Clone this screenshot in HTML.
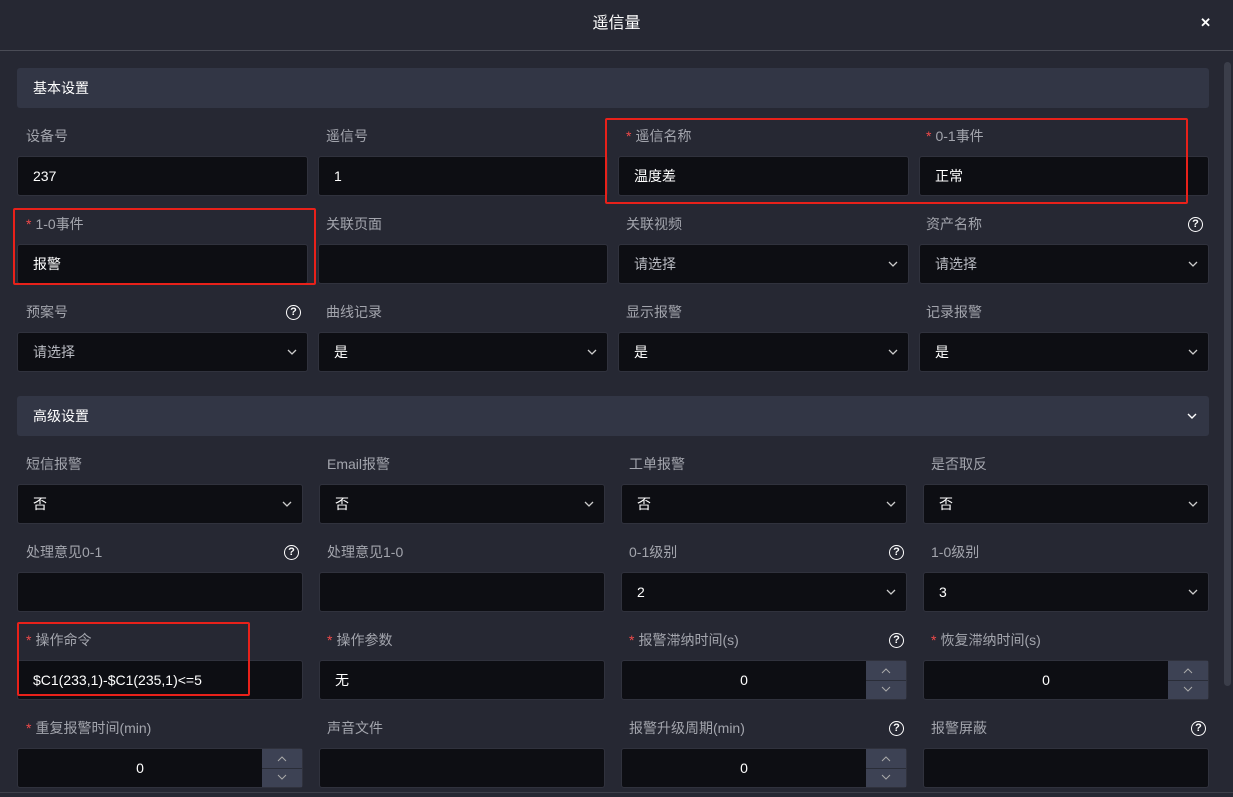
<!DOCTYPE html><html><head><meta charset="utf-8"><style>
*{box-sizing:border-box;margin:0;padding:0}
body{width:1233px;height:797px;background:#262833;font-family:"Liberation Sans","Noto Sans CJK SC",sans-serif;font-size:14px;color:#fff;position:relative;overflow:hidden}
.a{position:absolute}
.t{left:0;width:1233px;top:0;height:51px;line-height:48px;text-align:center;font-size:16px;border-bottom:1px solid #4a4c56}
.x{right:22px;top:15px;font-size:13px;font-weight:bold}
.bar{left:17px;width:1192px;height:40px;background:#323645;border-radius:3px;line-height:40px;padding-left:16px;font-size:14px}
.l{color:#a3a5ad;font-size:14px;height:20px;line-height:20px}
.l b{color:#f04a4a;font-weight:normal;margin-right:4px}
.i{height:40px;background:#0d0e13;border:1px solid #30323d;border-radius:3px;line-height:38px;padding-left:15px;font-size:14px}
.g{color:#b9bbc2}
.c{position:absolute;right:10px;top:14px;width:10px;height:10px}
.q{position:absolute;width:15px;height:15px;border:1.6px solid #fff;border-radius:50%;font-size:11px;line-height:12px;text-align:center;font-weight:bold;color:#fff}
.n{text-align:center;padding:0 40px 0 0}
.sp{position:absolute;right:0;top:0;width:40px;height:38px;background:#3d4254}
.sp:after{content:"";position:absolute;left:0;right:0;top:19px;border-top:1px solid #2a2d38}
.sp svg{position:absolute;left:15px}
.r{border:2px solid #e8211a;border-radius:2px}
</style></head><body>
<div class="a t">遥信量</div><div class="a x">✕</div>
<div class="a" style="right:2px;top:62px;width:7px;height:624px;background:#3b3e4a;border-radius:4px"></div>
<div class="a bar" style="top:68px">基本设置</div>

<div class="a l" style="left:26px;top:126px">设备号</div>
<div class="a l" style="left:326px;top:126px">遥信号</div>
<div class="a l" style="left:626px;top:126px"><b>*</b>遥信名称</div>
<div class="a l" style="left:926px;top:126px"><b>*</b>0-1事件</div>
<div class="a i" style="left:17px;top:156px;width:291px">237</div>
<div class="a i" style="left:318px;top:156px;width:290px">1</div>
<div class="a i" style="left:618px;top:156px;width:291px">温度差</div>
<div class="a i" style="left:919px;top:156px;width:290px">正常</div>

<div class="a l" style="left:26px;top:214px"><b>*</b>1-0事件</div>
<div class="a l" style="left:326px;top:214px">关联页面</div>
<div class="a l" style="left:626px;top:214px">关联视频</div>
<div class="a l" style="left:926px;top:214px">资产名称</div>
<div class="q" style="left:1188px;top:217px">?</div>
<div class="a i" style="left:17px;top:244px;width:291px">报警</div>
<div class="a i" style="left:318px;top:244px;width:290px"></div>
<div class="a i g" style="left:618px;top:244px;width:291px">请选择<svg class="c" viewBox="0 0 10 10"><path d="M1 3l4 4 4-4" stroke="#ccc" fill="none" stroke-width="1.3"/></svg></div>
<div class="a i g" style="left:919px;top:244px;width:290px">请选择<svg class="c" viewBox="0 0 10 10"><path d="M1 3l4 4 4-4" stroke="#ccc" fill="none" stroke-width="1.3"/></svg></div>

<div class="a l" style="left:26px;top:302px">预案号</div>
<div class="q" style="left:286px;top:305px">?</div>
<div class="a l" style="left:326px;top:302px">曲线记录</div>
<div class="a l" style="left:626px;top:302px">显示报警</div>
<div class="a l" style="left:926px;top:302px">记录报警</div>
<div class="a i g" style="left:17px;top:332px;width:291px">请选择<svg class="c" viewBox="0 0 10 10"><path d="M1 3l4 4 4-4" stroke="#ccc" fill="none" stroke-width="1.3"/></svg></div>
<div class="a i" style="left:318px;top:332px;width:290px">是<svg class="c" viewBox="0 0 10 10"><path d="M1 3l4 4 4-4" stroke="#ccc" fill="none" stroke-width="1.3"/></svg></div>
<div class="a i" style="left:618px;top:332px;width:291px">是<svg class="c" viewBox="0 0 10 10"><path d="M1 3l4 4 4-4" stroke="#ccc" fill="none" stroke-width="1.3"/></svg></div>
<div class="a i" style="left:919px;top:332px;width:290px">是<svg class="c" viewBox="0 0 10 10"><path d="M1 3l4 4 4-4" stroke="#ccc" fill="none" stroke-width="1.3"/></svg></div>

<div class="a bar" style="top:396px">高级设置<svg class="c" style="top:15px;right:12px" viewBox="0 0 10 10"><path d="M1 3l4 4 4-4" stroke="#fff" fill="none" stroke-width="1.4"/></svg></div>

<div class="a l" style="left:26px;top:454px">短信报警</div>
<div class="a l" style="left:327px;top:454px">Email报警</div>
<div class="a l" style="left:629px;top:454px">工单报警</div>
<div class="a l" style="left:931px;top:454px">是否取反</div>
<div class="a i" style="left:17px;top:484px;width:286px">否<svg class="c" viewBox="0 0 10 10"><path d="M1 3l4 4 4-4" stroke="#ccc" fill="none" stroke-width="1.3"/></svg></div>
<div class="a i" style="left:319px;top:484px;width:286px">否<svg class="c" viewBox="0 0 10 10"><path d="M1 3l4 4 4-4" stroke="#ccc" fill="none" stroke-width="1.3"/></svg></div>
<div class="a i" style="left:621px;top:484px;width:286px">否<svg class="c" viewBox="0 0 10 10"><path d="M1 3l4 4 4-4" stroke="#ccc" fill="none" stroke-width="1.3"/></svg></div>
<div class="a i" style="left:923px;top:484px;width:286px">否<svg class="c" viewBox="0 0 10 10"><path d="M1 3l4 4 4-4" stroke="#ccc" fill="none" stroke-width="1.3"/></svg></div>

<div class="a l" style="left:26px;top:542px">处理意见0-1</div>
<div class="q" style="left:284px;top:545px">?</div>
<div class="a l" style="left:327px;top:542px">处理意见1-0</div>
<div class="a l" style="left:629px;top:542px">0-1级别</div>
<div class="q" style="left:889px;top:545px">?</div>
<div class="a l" style="left:931px;top:542px">1-0级别</div>
<div class="a i" style="left:17px;top:572px;width:286px"></div>
<div class="a i" style="left:319px;top:572px;width:286px"></div>
<div class="a i" style="left:621px;top:572px;width:286px">2<svg class="c" viewBox="0 0 10 10"><path d="M1 3l4 4 4-4" stroke="#ccc" fill="none" stroke-width="1.3"/></svg></div>
<div class="a i" style="left:923px;top:572px;width:286px">3<svg class="c" viewBox="0 0 10 10"><path d="M1 3l4 4 4-4" stroke="#ccc" fill="none" stroke-width="1.3"/></svg></div>

<div class="a l" style="left:26px;top:630px"><b>*</b>操作命令</div>
<div class="a l" style="left:327px;top:630px"><b>*</b>操作参数</div>
<div class="a l" style="left:629px;top:630px"><b>*</b>报警滞纳时间(s)</div>
<div class="q" style="left:889px;top:633px">?</div>
<div class="a l" style="left:931px;top:630px"><b>*</b>恢复滞纳时间(s)</div>
<div class="a i" style="left:17px;top:660px;width:286px">$C1(233,1)-$C1(235,1)&lt;=5</div>
<div class="a i" style="left:319px;top:660px;width:286px">无</div>
<div class="a i n" style="left:621px;top:660px;width:286px">0<div class="sp"><svg style="top:6px" width="10" height="8"><path d="M1 6l4-4 4 4" stroke="#aaa" fill="none"/></svg><svg style="top:24px" width="10" height="8"><path d="M1 2l4 4 4-4" stroke="#aaa" fill="none"/></svg></div></div>
<div class="a i n" style="left:923px;top:660px;width:286px">0<div class="sp"><svg style="top:6px" width="10" height="8"><path d="M1 6l4-4 4 4" stroke="#aaa" fill="none"/></svg><svg style="top:24px" width="10" height="8"><path d="M1 2l4 4 4-4" stroke="#aaa" fill="none"/></svg></div></div>

<div class="a l" style="left:26px;top:718px"><b>*</b>重复报警时间(min)</div>
<div class="a l" style="left:327px;top:718px">声音文件</div>
<div class="a l" style="left:629px;top:718px">报警升级周期(min)</div>
<div class="q" style="left:889px;top:721px">?</div>
<div class="a l" style="left:931px;top:718px">报警屏蔽</div>
<div class="q" style="left:1191px;top:721px">?</div>
<div class="a i n" style="left:17px;top:748px;width:286px">0<div class="sp"><svg style="top:6px" width="10" height="8"><path d="M1 6l4-4 4 4" stroke="#aaa" fill="none"/></svg><svg style="top:24px" width="10" height="8"><path d="M1 2l4 4 4-4" stroke="#aaa" fill="none"/></svg></div></div>
<div class="a i" style="left:319px;top:748px;width:286px"></div>
<div class="a i n" style="left:621px;top:748px;width:286px">0<div class="sp"><svg style="top:6px" width="10" height="8"><path d="M1 6l4-4 4 4" stroke="#aaa" fill="none"/></svg><svg style="top:24px" width="10" height="8"><path d="M1 2l4 4 4-4" stroke="#aaa" fill="none"/></svg></div></div>
<div class="a i" style="left:923px;top:748px;width:286px"></div>
<div class="a" style="left:0;top:792px;width:1233px;border-top:1px solid #3e404a"></div>

<div class="a r" style="left:605px;top:118px;width:583px;height:86px"></div>
<div class="a r" style="left:13px;top:208px;width:303px;height:77px"></div>
<div class="a r" style="left:17px;top:622px;width:233px;height:74px"></div>
</body></html>
